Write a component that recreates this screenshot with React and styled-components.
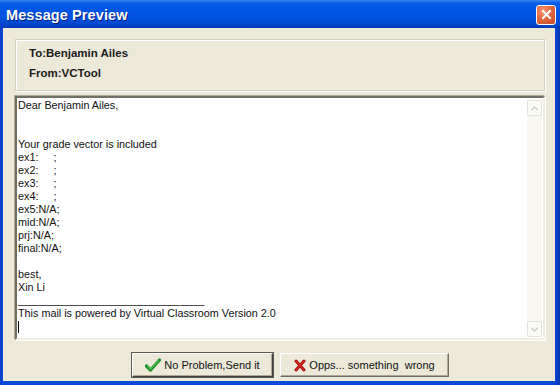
import React from "react";
import styled, { createGlobalStyle } from "styled-components";

const Global = createGlobalStyle`
  html, body { margin: 0; padding: 0; background: #ECE9D8; }
  body { width: 560px; height: 385px; overflow: hidden; font-family: "Liberation Sans", Arial, sans-serif; }
`;

const Window = styled.div`
  width: 560px;
  height: 385px;
  display: flex;
  flex-direction: column;
  background: linear-gradient(to right, #0a3fc8 0px, #0a4ad8 3px, #0a4ad8 554px, #0836b0 560px);
`;

const TitleBar = styled.div`
  height: 28px;
  flex: none;
  display: flex;
  align-items: center;
  justify-content: space-between;
  padding: 0 4px 0 6px;
  background: linear-gradient(to bottom, #3d86f2 0px, #0a5ee8 3px, #0056e6 9px, #0051de 18px, #0046cc 25px, #0038b4 28px);
`;

const Title = styled.div`
  color: #fff;
  font-family: "Liberation Sans", Arial, sans-serif;
  font-weight: bold;
  font-size: 14.5px;
  letter-spacing: 0.1px;
  text-shadow: 1px 1px 0 #0a1f80;
  padding-top: 1px;
`;

const CloseButton = styled.div`
  width: 18px;
  height: 18px;
  margin-top: 1px;
  border: 1px solid #fff;
  border-radius: 3px;
  background: radial-gradient(circle at 35% 30%, #f09a78 0%, #e2693f 45%, #c84a22 100%);
  display: flex;
  align-items: center;
  justify-content: center;
`;

const Body = styled.div`
  flex: 1;
  display: flex;
  flex-direction: column;
  background: #ECE9D8;
  margin: 0 5px 4px 3px;
  padding: 11px 10px 0 12px;
`;

const GroupBox = styled.div`
  border: 1px solid #D0D0BF;
  box-shadow: inset 1px 1px 0 #fff, 1px 1px 0 #fff;
  display: flex;
  flex-direction: column;
  gap: 8px;
  padding: 7px 0 0 13px;
  box-sizing: border-box;
  height: 52px;
`;

const HeaderLine = styled.div`
  font-family: "Liberation Sans", Arial, sans-serif;
  font-weight: bold;
  font-size: 11.5px;
  color: #1a1a1a;
  line-height: 12px;
`;

const Editor = styled.div`
  margin-top: 5px;
  height: 240px;
  display: flex;
  background: #fff;
  border-style: solid;
  border-width: 2px;
  border-color: #716F64 #F1EFE2 #F1EFE2 #716F64;
  box-shadow: -1px -1px 0 #ACA899, 1px 1px 0 #fff;
`;

const Content = styled.div`
  flex: 1;
  padding: 1px 0 0 1px;
  font-family: "Liberation Sans", Arial, sans-serif;
  font-size: 10.8px;
  line-height: 13px;
  color: #111;
  white-space: pre;
`;

const Line = styled.div`
  height: 13px;
`;

const Caret = styled.div`
  width: 1px;
  height: 12px;
  margin-top: 1px;
  background: #000;
`;

const ScrollBar = styled.div`
  width: 15px;
  flex: none;
  margin: 2px 1px 1px 0;
  display: flex;
  flex-direction: column;
  justify-content: space-between;
  background: #F8F7F2;
`;

const ScrollButton = styled.div`
  height: 14px;
  border: 1px solid #E4E2D8;
  border-radius: 2px;
  background: #FAFAF6;
  display: flex;
  align-items: center;
  justify-content: center;
`;

const ButtonRow = styled.div`
  display: flex;
  gap: 7px;
  padding: 13px 0 0 117px;
`;

const Button = styled.div`
  width: ${(p) => p.$w}px;
  height: 24px;
  box-sizing: border-box;
  display: flex;
  align-items: center;
  justify-content: center;
  gap: 3px;
  background: #ECE9D8;
  border-style: solid;
  border-width: 1px;
  border-color: #fff ${(p) => (p.$default ? "#404040" : "#716F64")} ${(p) => (p.$default ? "#404040" : "#716F64")} #fff;
  box-shadow: ${(p) =>
    p.$default
      ? "inset -1px -1px 0 #ACA899, 0 0 0 1px #5a5a50"
      : "inset -1px -1px 0 #ACA899"};
  font-family: "Liberation Sans", Arial, sans-serif;
  font-size: 11px;
  color: #111;
  white-space: pre;
`;

const Check = () => (
  <svg width="16" height="14" viewBox="0 0 16 14">
    <path d="M1.5 8 L5.5 12 L14.5 2" fill="none" stroke="#1e8a2a" strokeWidth="3.2" strokeLinecap="round" strokeLinejoin="round" />
    <path d="M2.5 8 L5.5 11 L13.5 2.5" fill="none" stroke="#4cc24c" strokeWidth="1.2" strokeLinecap="round" strokeLinejoin="round" />
  </svg>
);

const Cross = () => (
  <svg width="12" height="13" viewBox="0 0 12 13">
    <path d="M2 2 L10 11 M10 2 L2 11" fill="none" stroke="#b01010" strokeWidth="3" strokeLinecap="round" />
    <path d="M2.5 2.5 L9.5 10.5 M9.5 2.5 L2.5 10.5" fill="none" stroke="#e03a2a" strokeWidth="1" strokeLinecap="round" />
  </svg>
);

const lines = [
  "Dear Benjamin Ailes,",
  "",
  "",
  "Your grade vector is included",
  "ex1:     ;",
  "ex2:     ;",
  "ex3:     ;",
  "ex4:     ;",
  "ex5:N/A;",
  "mid:N/A;",
  "prj:N/A;",
  "final:N/A;",
  "",
  "best,",
  "Xin Li",
  "_______________________________",
  "This mail is powered by Virtual Classroom Version 2.0",
];

export default function App() {
  return (
    <>
      <Global />
      <Window>
        <TitleBar>
          <Title>Message Preview</Title>
          <CloseButton>
            <svg width="11" height="11" viewBox="0 0 11 11">
              <path d="M2 2 L9 9 M9 2 L2 9" stroke="#fff" strokeWidth="2" strokeLinecap="square" />
            </svg>
          </CloseButton>
        </TitleBar>
        <Body>
          <GroupBox>
            <HeaderLine>To:Benjamin Ailes</HeaderLine>
            <HeaderLine>From:VCTool</HeaderLine>
          </GroupBox>
          <Editor>
            <Content>
              {lines.map((l, i) => (
                <Line key={i}>{l}</Line>
              ))}
              <Caret />
            </Content>
            <ScrollBar>
              <ScrollButton>
                <svg width="7" height="5" viewBox="0 0 7 5">
                  <path d="M0.5 4 L3.5 1 L6.5 4" fill="none" stroke="#C8C6BC" strokeWidth="1.2" />
                </svg>
              </ScrollButton>
              <ScrollButton>
                <svg width="7" height="5" viewBox="0 0 7 5">
                  <path d="M0.5 1 L3.5 4 L6.5 1" fill="none" stroke="#C8C6BC" strokeWidth="1.2" />
                </svg>
              </ScrollButton>
            </ScrollBar>
          </Editor>
          <ButtonRow>
            <Button $w={141} $default>
              <Check />
              No Problem,Send it
            </Button>
            <Button $w={169}>
              <Cross />
              {"Opps... something  wrong"}
            </Button>
          </ButtonRow>
        </Body>
      </Window>
    </>
  );
}
